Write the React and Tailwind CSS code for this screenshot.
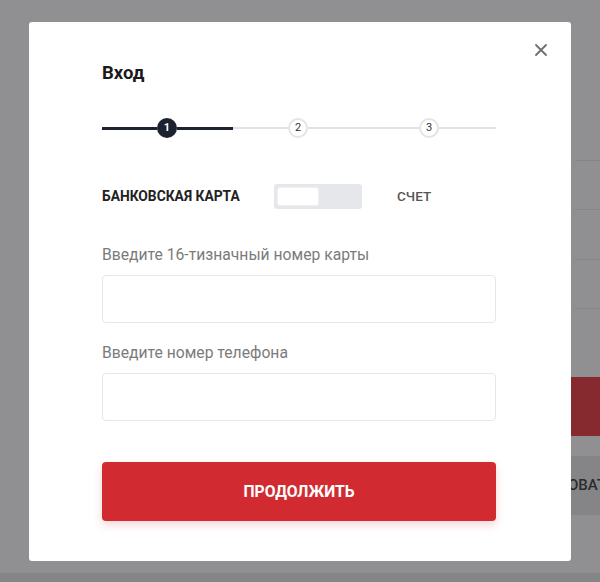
import React from 'react';

function Step({ n, active }) {
  return active ? (
    <div className="w-5 h-5 shrink-0 rounded-full bg-[#1d2230] text-white text-[11px] font-bold flex items-center justify-center">
      {n}
    </div>
  ) : (
    <div className="w-5 h-5 shrink-0 rounded-full bg-white border-2 border-[#e4e4e7] text-[#333] text-[11px] flex items-center justify-center">
      {n}
    </div>
  );
}

function Field({ label, className }) {
  return (
    <div className={className}>
      <div className="text-[15.7px] leading-5 text-[#7b7b7b]">{label}</div>
      <input
        type="text"
        className="mt-[10px] block w-full h-12 rounded-[4px] border border-[#e7e7e9] bg-white px-3 outline-none"
      />
    </div>
  );
}

export default function App() {
  return (
    <div className="relative w-[600px] h-[582px] overflow-hidden bg-[#909093] font-['Roboto',sans-serif]">
      {/* page behind the overlay */}
      <div className="flex flex-col pt-[160px]">
        <div className="ml-[575px] h-[49px] border-t border-[#858588]"></div>
        <div className="ml-[575px] h-[50px] border-t border-[#858588]"></div>
        <div className="ml-[575px] h-[49px] border-t border-[#858588]"></div>
        <div className="ml-[575px] h-[69px] border-t border-[#858588]"></div>
        <div className="ml-[540px] h-[59px] bg-[#862a30]"></div>
        <div className="ml-[540px] mt-5 h-[59px] bg-[#858588] flex items-center pl-[28px] text-[15px] font-medium text-[#2b2b2e] whitespace-nowrap overflow-hidden">
          ОВАТЬ
        </div>
        <div className="mt-[58px] h-3 bg-[#858588]"></div>
      </div>

      {/* modal */}
      <div className="absolute left-[29px] top-[22px] w-[542px] h-[539px] bg-white rounded-[3px] pl-[73px] pr-[75px] pt-[40px]">
        <button className="absolute top-[22px] right-[24px] w-3 h-3">
          <svg viewBox="0 0 12 12" className="w-3 h-3" fill="none" stroke="#6e6e70" strokeWidth="1.8" strokeLinecap="round">
            <path d="M1 1L11 11M11 1L1 11" />
          </svg>
        </button>

        <h2 className="text-[18.5px] leading-[22px] font-bold text-[#1a1a1a]">Вход</h2>

        <div className="mt-[34px] flex items-center h-5">
          <div className="w-[55px] h-[3px] bg-[#1d2230]"></div>
          <Step n={1} active />
          <div className="w-[56px] h-[3px] bg-[#1d2230]"></div>
          <div className="w-[55px] h-[2px] bg-[#e2e2e5]"></div>
          <Step n={2} />
          <div className="w-[111px] h-[2px] bg-[#e2e2e5]"></div>
          <Step n={3} />
          <div className="flex-1 h-[2px] bg-[#e2e2e5]"></div>
        </div>

        <div className="mt-[45px] flex items-center h-[26px]">
          <span className="w-[172px] text-[13.8px] font-bold text-[#222]">БАНКОВСКАЯ КАРТА</span>
          <div className="w-[88px] h-[25px] rounded-[3px] bg-[#e6e7ea] p-[3px]">
            <div className="w-[42px] h-[19px] rounded-[3px] bg-white border border-[#f0f0f2]"></div>
          </div>
          <span className="ml-[35px] text-[13.5px] font-medium text-[#555]">СЧЕТ</span>
        </div>

        <Field className="mt-[36px]" label="Введите 16-тизначный номер карты" />
        <Field className="mt-5" label="Введите номер телефона" />

        <button className="mt-[41px] w-full h-[59px] rounded-[4px] bg-[#d12b31] text-white text-[15.7px] font-bold shadow-[0_4px_10px_rgba(209,43,49,0.2)]">
          ПРОДОЛЖИТЬ
        </button>
      </div>
    </div>
  );
}
